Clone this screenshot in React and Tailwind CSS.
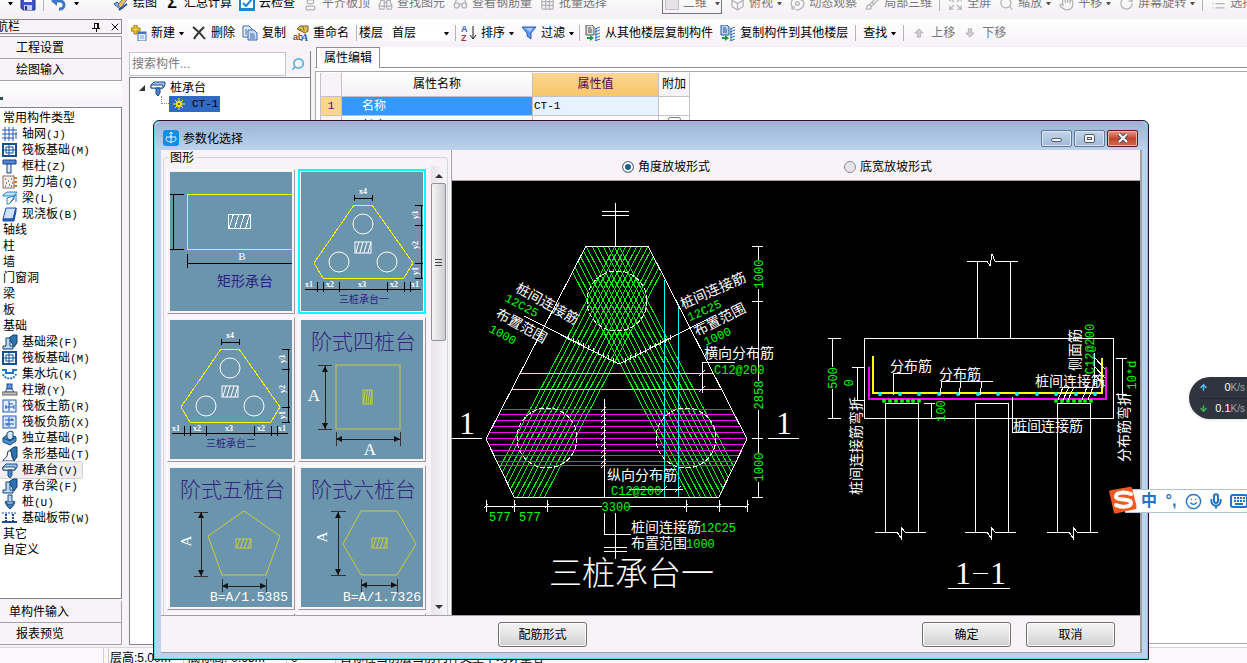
import React, { useState } from 'react';
import {
  AlignVerticalJustifyStart,
  ArrowDown,
  ArrowUp,
  Binoculars,
  Box,
  Brush,
  Expand,
  Glasses,
  Grid3x3,
  Hand,
  List,
  Mic,
  Orbit,
  RotateCw,
  Search,
  Smile,
  X,
} from 'lucide-react';

const CAD_FONT = '"Liberation Mono", "Noto Sans CJK SC", monospace';

/* ---------- small shared parts ---------- */

const Caret = ({ className = 'border-t-black' }) => (
  <span className={`w-[5px] shrink-0 border-x-2 border-t-[3px] border-x-transparent ${className}`} />
);

const Separator = ({ tight }) => (
  <span className={`h-4 w-px shrink-0 bg-[#b4b4b8] ${tight ? '-mx-[2px]' : ''}`} />
);

const ToolButton = ({ icon, label, caret, disabled }) => (
  <button
    type="button"
    disabled={disabled}
    className={`flex shrink-0 items-center gap-1 whitespace-nowrap ${disabled ? 'text-[#77777b]' : 'text-black'}`}
  >
    <span className="flex h-4 w-4 items-center justify-center">{icon}</span>
    {label}
    {caret && <Caret className={disabled ? 'border-t-[#555555]' : 'border-t-black'} />}
  </button>
);

/* ---------- icons ---------- */

const SaveIcon = () => (
  <svg viewBox="0 0 16 16" className="h-4 w-4">
    <path d="M1 1h14v14H3l-2-2z" fill="#3b55c4" stroke="#22358f" />
    <rect x="4" y="1" width="8" height="6" fill="#f4f6ff" />
    <rect x="4" y="10" width="8" height="5" fill="#c9d0ee" />
    <rect x="5" y="11" width="2" height="4" fill="#22358f" />
  </svg>
);

const UndoIcon = () => (
  <svg viewBox="0 0 16 16" className="h-4 w-4">
    <path d="M3 6h6a4 4 0 0 1 0 8H8" fill="none" stroke="#3d76c9" strokeWidth="3" />
    <path d="M6 1v10L0 6z" fill="#3d76c9" />
  </svg>
);

const DrawIcon = () => (
  <svg viewBox="0 0 16 16" className="h-4 w-4">
    <path d="M1 9l6 5 3-1-6-6z" fill="#8fb4e8" stroke="#2a4f97" />
    <path d="M5 10L12 1l3 2-7 10z" fill="#eac05a" stroke="#5c6fa8" />
    <path d="M6 15l8-6" stroke="#2a4f97" strokeWidth="2" />
  </svg>
);

const CloudCheckIcon = () => (
  <svg viewBox="0 0 16 16" className="h-4 w-4">
    <rect width="16" height="15" y="1" fill="#1e86d0" />
    <rect x="2" y="3" width="12" height="10" fill="#ffffff" />
    <path d="M4 8l3 3 6-7" fill="none" stroke="#1e86d0" strokeWidth="2" />
  </svg>
);

const NewIcon = () => (
  <svg viewBox="0 0 16 16" className="h-4 w-4">
    <path d="M3 0h3v3h3v3H6v3H3V6H0V3h3z" fill="#f3c932" stroke="#9c7a12" />
    <rect x="7" y="7" width="8" height="9" fill="#e9f1fd" stroke="#4572b8" />
    <rect x="7" y="7" width="8" height="2" fill="#4572b8" />
    <path d="M9 11h4M9 13h4" stroke="#7fa2d8" />
  </svg>
);

const DeleteIcon = () => (
  <svg viewBox="0 0 14 14" className="h-[14px] w-[14px]">
    <path d="M1 1c4 3 8 7 12 12M12 1C8 5 4 9 2 13" fill="none" stroke="#333333" strokeWidth="2" />
  </svg>
);

const CopyIcon = () => (
  <svg viewBox="0 0 16 16" className="h-4 w-4">
    <path d="M1 1h6l3 3v8H1z" fill="#e6effc" stroke="#3e68b3" />
    <path d="M6 5h6l3 3v7H6z" fill="#c8dbf7" stroke="#3e68b3" />
    <path d="M8 9h4M8 11h5M8 13h5M3 5h2M3 7h2M3 9h2" stroke="#3e68b3" />
  </svg>
);

const RenameIcon = () => (
  <svg viewBox="0 0 16 16" className="h-4 w-4">
    <path d="M4 4l3-3h8v5l-3 2-4-2z" fill="#e4bb50" stroke="#776021" />
    <path d="M4 4l5 1M10 1l1 5" stroke="#5d8a3c" />
    <text x="0" y="15" fontSize="9" fontFamily="Liberation Sans" fill="#222222">ab</text>
    <text x="8" y="16" fontSize="11" fontWeight="bold" fontStyle="italic" fontFamily="Liberation Serif" fill="#2b5fc0">A</text>
  </svg>
);

const SortIcon = () => (
  <svg viewBox="0 0 16 16" className="h-4 w-4">
    <text x="0" y="7" fontSize="9" fontWeight="bold" fontFamily="Liberation Sans" fill="#3567b8">A</text>
    <text x="0" y="16" fontSize="9" fontWeight="bold" fontFamily="Liberation Sans" fill="#a33a3a">Z</text>
    <path d="M12 1v13M9 10l3 4 3-4" fill="none" stroke="#222222" />
  </svg>
);

const FilterIcon = () => (
  <svg viewBox="0 0 16 16" className="h-4 w-4">
    <path d="M1 2h14L10 8v6l-4-3V8z" fill="#5b97ee" stroke="#2a5cb8" />
    <path d="M4 3h8L9 7z" fill="#a8cbfb" />
  </svg>
);

const FloorCopyIcon = ({ fill, stroke }) => (
  <svg viewBox="0 0 16 16" className="h-4 w-4">
    <path d="M1 0h6l2 2v8H1z" fill={fill} stroke={stroke} />
    <path d="M3 3h3M3 5h4M3 7h4" stroke={stroke} />
    <path d="M2 12h3v-2l4 3-4 3v-2H2z" fill="#1d9b3c" />
    <path d="M10 4l5-2M10 7l5-2M10 10l5-2M10 13l5-2M10 16l5-2M11 3v13" stroke="#2d6fc4" />
  </svg>
);

const MoveArrowIcon = ({ down }) => (
  <svg viewBox="0 0 12 12" className={`h-[10px] w-[10px] ${down ? 'rotate-180' : ''}`}>
    <path d="M6 1l5 5H8v5H4V6H1z" fill="#d0ccd2" stroke="#b2adb5" />
  </svg>
);

const PinIcon = () => (
  <svg viewBox="0 0 10 10" className="h-[10px] w-[10px]" shapeRendering="crispEdges">
    <path d="M3 1h5M3 1v5M6 1v5M7 1v5M1 6h8M5 6v4" fill="none" stroke="#111111" />
  </svg>
);

const KeyboardIcon = () => (
  <svg viewBox="0 0 18 14" className="h-[14px] w-[18px]">
    <rect x="1" y="1" width="16" height="12" rx="2" fill="#ffffff" stroke="#2173c8" strokeWidth="2" />
    <path d="M4 4h11M4 7h11" stroke="#2173c8" strokeWidth="2" strokeDasharray="2 1" />
    <path d="M5 10h8" stroke="#2173c8" strokeWidth="2" />
  </svg>
);

// Component icons of the navigation tree, all on a 16 x 16 grid
const NAV_ICONS = {
  axis: <path d="M0 4h15M0 8h15M0 12h12M3 1v14M7 1v14M11 1v14M14 6v7" stroke="#2a56b8" />,
  raft: (
    <g fill="none" stroke="#174f8f">
      <rect x="1" y="2" width="13" height="12" strokeWidth="2" />
      <rect x="4" y="5" width="7" height="6" />
      <path d="M7 2v12M2 8h12" />
    </g>
  ),
  column: (
    <g stroke="#1d3f8c">
      <path d="M1 2h13v4H1z" fill="#4f86d8" />
      <path d="M5 6h4v9H5z" fill="#dbe9ff" />
    </g>
  ),
  wall: (
    <g>
      <rect x="1" y="2" width="11" height="12" fill="#f3ece8" stroke="#8a6f60" />
      <path d="M3 5h1M6 7h1M9 5h1M4 9h1M7 11h1M3 12h1M10 9h1M9 12h1" stroke="#333333" />
      <path d="M12 4h3M12 8h3M12 12h3" stroke="#d07a20" strokeWidth="2" />
    </g>
  ),
  beam: (
    <g stroke="#2b83c8">
      <path d="M1 5l4-3h10l-3 4H1z" fill="#bfe0f8" />
      <path d="M5 8l7-2v3l-5 5H5z" fill="#ffffff" />
      <path d="M8 13L14 4v8" fill="none" />
    </g>
  ),
  slab: (
    <g stroke="#1e4fae">
      <path d="M4 2h10l-3 11H1z" fill="#cfe2fb" />
      <path d="M1 13h10l3-11v3l-2 10H1z" fill="#2f64c4" />
    </g>
  ),
  footingBeam: (
    <g stroke="#123f73">
      <path d="M7 4l4-3h4v8l-3 4z" fill="#2a72b0" />
      <path d="M1 15v-3h3V4h4v8h3v3z" fill="#b7d8f2" />
    </g>
  ),
  pit: (
    <g fill="none" stroke="#2676c8" strokeWidth="2">
      <path d="M0 4h4v3h7V4h4" />
      <path d="M1 8c2 6 11 6 13 0" strokeDasharray="2 1" />
    </g>
  ),
  pier: (
    <g stroke="#1d4f9c">
      <rect x="5" y="2" width="5" height="5" fill="#5f93dd" />
      <path d="M3 10l2-3h5l2 3z" fill="#ffffff" />
      <rect x="0" y="10" width="15" height="3" fill="#bdbdbd" stroke="#666666" />
    </g>
  ),
  mainBar: (
    <g fill="none" stroke="#2358b4">
      <rect x="1" y="2" width="13" height="12" fill="#e7f0ff" />
      <path d="M3 9h9M7 3v10M7 6h4M4 7v4M12 7v4" />
    </g>
  ),
  negBar: (
    <g fill="none" stroke="#2358b4">
      <rect x="1" y="2" width="13" height="12" fill="#d8e6fd" />
      <path d="M3 6h9M3 10h9M7 3v10M10 4v3M5 9v3" />
    </g>
  ),
  isolated: (
    <g stroke="#154a80">
      <path d="M1 8l5-4 8 3v4l-6 4-7-3z" fill="#4a90c8" />
      <path d="M5 3l3-2 3 1v6l-3 2-3-2z" fill="#d3e8f8" />
      <path d="M1 8l7 3 6-4" fill="none" />
    </g>
  ),
  strip: (
    <g stroke="#123f73">
      <path d="M8 4l4-3h3v10l-3 4z" fill="#2a72b0" />
      <path d="M1 15c0-3 3-2 4-5l1-5h3l1 6 2 4z" fill="#ffffff" />
    </g>
  ),
  cap: (
    <g stroke="#1b4a86">
      <path d="M1 5l3-3h11v3l-2 3H1z" fill="#9dc4ea" />
      <path d="M1 5h12v3H1z" fill="#ffffff" />
      <path d="M6 8h4v5l-2 3-2-2z" fill="#4a86c8" />
    </g>
  ),
  pile: (
    <g stroke="#1b4a86">
      <path d="M6 1h4v7H6z" fill="#bcd6f0" />
      <path d="M3 8l2-1v3h6V7l2 1-2 4-3 3-3-3z" fill="#3f78b8" />
    </g>
  ),
  band: (
    <g stroke="#1b4aa0">
      <path d="M0 3h15" strokeDasharray="2 1" />
      <path d="M0 12h15" strokeWidth="2" />
      <path d="M4 4v8M11 4v8" strokeWidth="2" strokeDasharray="2 1" />
    </g>
  ),
};

const NavIcon = ({ name }) => (
  <svg viewBox="0 0 16 16" className="h-4 w-4 shrink-0" fill="none">
    {NAV_ICONS[name]}
  </svg>
);

/* ---------- top toolbars ---------- */

const grey = { size: 15, color: '#b4b1b6', strokeWidth: 2 };

const MainToolbar = () => (
  <header className="h-[19px] shrink-0 overflow-hidden bg-[#f6f1f6]">
    <div className="-mt-2 flex h-[22px] items-center gap-[7px] bg-gradient-to-b from-white to-[#f4f2f4] pl-1">
      <div className="flex w-[102px] shrink-0 items-center gap-[7px] pl-1">
        <Caret />
        <button type="button" aria-label="保存"><SaveIcon /></button>
        <Separator />
        <button type="button" aria-label="撤销"><UndoIcon /></button>
        <Caret />
      </div>
      <ToolButton icon={<DrawIcon />} label="绘图" />
      <ToolButton icon={<span className="text-base font-bold">Σ</span>} label="汇总计算" />
      <ToolButton icon={<CloudCheckIcon />} label="云检查" />
      <ToolButton icon={<AlignVerticalJustifyStart {...grey} />} label="平齐板顶" disabled />
      <ToolButton icon={<Binoculars {...grey} />} label="查找图元" disabled />
      <ToolButton icon={<Glasses {...grey} />} label="查看钢筋量" disabled />
      <ToolButton icon={<Grid3x3 {...grey} />} label="批量选择" disabled />
      <button
        type="button"
        disabled
        className="ml-12 flex h-[22px] w-[60px] shrink-0 items-center gap-1 border border-[#77777b] pl-[2px] text-[#77777b]"
      >
        <span className="h-[13px] w-[14px] border border-[#c4c0c6] bg-[#e6e3e8]" />
        二维
        <Caret className="ml-1 border-t-[#555555]" />
      </button>
      <ToolButton icon={<Box {...grey} />} label="俯视" caret disabled />
      <ToolButton icon={<Orbit {...grey} />} label="动态观察" disabled />
      <ToolButton icon={<Brush {...grey} />} label="局部三维" disabled />
      <Separator />
      <ToolButton icon={<Expand {...grey} />} label="全屏" disabled />
      <ToolButton icon={<Search {...grey} />} label="缩放" caret disabled />
      <ToolButton icon={<Hand {...grey} />} label="平移" caret disabled />
      <ToolButton icon={<RotateCw {...grey} />} label="屏幕旋转" caret disabled />
      <Separator />
      <ToolButton icon={<List {...grey} />} label="选择楼层" disabled />
    </div>
  </header>
);

const ComponentToolbar = () => (
  <div className="flex h-[28px] shrink-0 items-center gap-[7px] overflow-hidden bg-gradient-to-b from-white to-[#f6f1f6] pl-[3px]">
    <ToolButton icon={<NewIcon />} label="新建" caret />
    <ToolButton icon={<DeleteIcon />} label="删除" />
    <ToolButton icon={<CopyIcon />} label="复制" />
    <ToolButton icon={<RenameIcon />} label="重命名" />
    <div className="flex shrink-0 items-center gap-[2px]">
      <Separator />
      <label htmlFor="floor">楼层</label>
    </div>
    <div className="flex w-[60px] shrink-0 items-center bg-white">
      <select id="floor" className="w-[54px] appearance-none bg-transparent pl-[2px] text-xs outline-none">
        <option>首层</option>
        <option>基础层</option>
      </select>
      <Caret />
    </div>
    <Separator tight />
    <ToolButton icon={<SortIcon />} label="排序" caret />
    <ToolButton icon={<FilterIcon />} label="过滤" caret />
    <Separator tight />
    <ToolButton icon={<FloorCopyIcon fill="#dddddd" stroke="#555555" />} label="从其他楼层复制构件" />
    <ToolButton icon={<FloorCopyIcon fill="#b9d4f6" stroke="#2c559c" />} label="复制构件到其他楼层" />
    <Separator />
    <button type="button" className="flex shrink-0 items-center gap-1">
      查找
      <Caret />
    </button>
    <Separator />
    <ToolButton icon={<MoveArrowIcon />} label="上移" disabled />
    <ToolButton icon={<MoveArrowIcon down />} label="下移" disabled />
  </div>
);

/* ---------- left navigation ---------- */

const navItems = [
  { label: '常用构件类型' },
  { label: '轴网', hotkey: '(J)', icon: 'axis' },
  { label: '筏板基础', hotkey: '(M)', icon: 'raft' },
  { label: '框柱', hotkey: '(Z)', icon: 'column' },
  { label: '剪力墙', hotkey: '(Q)', icon: 'wall' },
  { label: '梁', hotkey: '(L)', icon: 'beam' },
  { label: '现浇板', hotkey: '(B)', icon: 'slab' },
  { label: '轴线' },
  { label: '柱' },
  { label: '墙' },
  { label: '门窗洞' },
  { label: '梁' },
  { label: '板' },
  { label: '基础' },
  { label: '基础梁', hotkey: '(F)', icon: 'footingBeam' },
  { label: '筏板基础', hotkey: '(M)', icon: 'raft' },
  { label: '集水坑', hotkey: '(K)', icon: 'pit' },
  { label: '柱墩', hotkey: '(Y)', icon: 'pier' },
  { label: '筏板主筋', hotkey: '(R)', icon: 'mainBar' },
  { label: '筏板负筋', hotkey: '(X)', icon: 'negBar' },
  { label: '独立基础', hotkey: '(P)', icon: 'isolated' },
  { label: '条形基础', hotkey: '(T)', icon: 'strip' },
  { label: '桩承台', hotkey: '(V)', icon: 'cap', selected: true },
  { label: '承台梁', hotkey: '(F)', icon: 'footingBeam' },
  { label: '桩', hotkey: '(U)', icon: 'pile' },
  { label: '基础板带', hotkey: '(W)', icon: 'band' },
  { label: '其它' },
  { label: '自定义' },
];

const NavSection = ({ label, className = 'pl-4' }) => (
  <button
    type="button"
    className={`h-[22px] shrink-0 border-b border-r border-[#a4a0a8] bg-[#f7f3f7] text-left ${className}`}
  >
    {label}
  </button>
);

const Navigation = () => (
  <aside className="flex w-[128px] shrink-0 flex-col bg-[#f7f3f7] pr-[6px]">
    <div className="flex h-[15px] shrink-0 items-center border border-l-0 border-[#8c868e]">
      <span className="-ml-1 flex-1">航栏</span>
      <button type="button" aria-label="固定" className="w-[18px]"><PinIcon /></button>
      <button type="button" aria-label="关闭"><X size={12} /></button>
    </div>
    <div className="mt-[2px] flex shrink-0 flex-col border-t border-[#a4a0a8]">
      <NavSection label="工程设置" />
      <NavSection label="绘图输入" />
    </div>
    <div className="flex h-[26px] shrink-0 items-center bg-gradient-to-b from-white to-[#f7f3f7]">
      <span className="mt-2 h-[3px] w-[3px] bg-[#23524f]" />
    </div>
    <ul className="flex-1 overflow-hidden border-r border-t border-[#85818c] bg-white pt-[2px]">
      {navItems.map((item, index) => (
        <li key={index} className="flex h-4 items-center">
          {item.icon ? (
            <button
              type="button"
              className={`flex h-4 items-center gap-1 whitespace-nowrap pl-[2px] pr-1 ${
                item.selected ? 'rounded-xs bg-[#f0eef0] outline outline-1 outline-[#d4d0d4]' : ''
              }`}
            >
              <NavIcon name={item.icon} />
              <span>
                {item.label}
                <span className="font-['Liberation_Mono'] text-[11px]">{item.hotkey}</span>
              </span>
            </button>
          ) : (
            <button type="button" className="pl-[3px]">{item.label}</button>
          )}
        </li>
      ))}
    </ul>
    <div className="flex shrink-0 flex-col border-t border-[#85818c] pb-[2px] pt-[2px]">
      <NavSection label="单构件输入" className="pl-[9px]" />
      <NavSection label="报表预览" />
    </div>
  </aside>
);

/* ---------- component tree and property grid ---------- */

const ComponentTree = () => (
  <section className="flex w-[183px] shrink-0 flex-col pb-[2px] pl-px pt-1">
    <div className="flex h-[26px] shrink-0 items-center border-r border-[#85818c] bg-[#f7f3f7]">
      <input
        type="text"
        aria-label="搜索构件"
        placeholder="搜索构件..."
        className="h-6 w-[157px] border border-[#c4c4cc] bg-white px-[2px] text-xs outline-none placeholder:text-[#77777b]"
      />
      <button type="button" aria-label="搜索" className="flex flex-1 justify-center">
        <Search size={14} color="#5eb0e6" strokeWidth={3} className="-scale-x-100" />
      </button>
    </div>
    <div className="flex-1 border border-[#85818c] bg-white pt-[2px]">
      <div className="flex h-4 items-center gap-1 pl-2">
        <svg viewBox="0 0 8 8" className="h-2 w-2"><path d="M7 1v6H1z" fill="#333333" /></svg>
        <NavIcon name="cap" />
        桩承台
      </div>
      <div className="flex h-4 items-center pl-[31px]">
        <span className="h-2 w-2 -translate-y-1 border-b border-l border-dotted border-[#888888]" />
        <button type="button" className="flex h-4 w-[51px] items-center gap-[7px] bg-[#316ac5] pl-1 text-black">
          <svg viewBox="0 0 12 12" className="h-3 w-3">
            <path d="M6 0v12M0 6h12M2 2l8 8M10 2l-8 8" stroke="#ffee00" strokeWidth="1" />
            <circle cx="6" cy="6" r="3" fill="#ffee00" />
            <circle cx="6" cy="6" r="1" fill="#333300" />
          </svg>
          <span className="font-['Liberation_Mono'] text-[11px]">CT-1</span>
        </button>
      </div>
    </div>
  </section>
);

const PropertyEditor = () => (
  <section className="ml-1 flex min-w-0 flex-1 flex-col bg-white">
    <div className="flex h-[21px] shrink-0 items-end border-b border-[#8f8f8f]">
      <button type="button" className="-mb-px ml-px h-[21px] w-16 border border-b-0 border-[#8f8f8f] bg-white">
        属性编辑
      </button>
    </div>
    <div className="mb-[3px] mt-[3px] flex-1 border-b border-l border-t border-[#a8a8a8] pl-1 pt-px">
      <table className="w-[370px] table-fixed border-collapse">
        <thead>
          <tr className="h-[23px]">
            <th className="w-[21px] border border-t-0 border-[#c4c0c4] bg-[#f7f3f7]" />
            <th className="w-[191px] border border-t-0 border-[#c4c0c4] bg-gradient-to-b from-white to-[#f4f0f4] font-normal">属性名称</th>
            <th className="w-[126px] border border-t-0 border-[#c4c0c4] bg-gradient-to-b from-[#fbd694] to-[#f7c668] font-normal text-[#5a0058]">属性值</th>
            <th className="border border-t-0 border-[#c4c0c4] bg-gradient-to-b from-white to-[#f4f0f4] font-normal">附加</th>
          </tr>
        </thead>
        <tbody>
          <tr className="h-[19px] leading-4">
            <td className="border border-[#c4c0c4] bg-[#fcd68c] text-center font-['Liberation_Mono'] text-[11px] text-[#5a0058]">1</td>
            <td className="border border-[#c4c0c4] bg-[#3399ff] pl-5 text-white">名称</td>
            <td className="border border-[#c4c0c4] bg-[#e6f2ff] pl-px font-['Liberation_Mono'] text-[11px]">CT-1</td>
            <td className="border border-[#c4c0c4]" />
          </tr>
          <tr className="h-[19px] leading-5">
            <td className="border border-[#c4c0c4] bg-[#f7f3f7] text-center font-['Liberation_Mono'] text-[11px]">2</td>
            <td className="border border-[#c4c0c4] pl-5">长度</td>
            <td className="border border-[#c4c0c4]" />
            <td className="border border-[#c4c0c4] text-center"><input type="checkbox" aria-label="附加" /></td>
          </tr>
        </tbody>
      </table>
    </div>
  </section>
);

const StatusBar = () => (
  <footer className="flex h-4 shrink-0 gap-1 overflow-hidden border-t border-[#d8d4d8] bg-[#faf8fa] leading-5">
    <span className="w-[104px] shrink-0 border-r border-[#d0ccd0]" />
    <span className="w-[76px] shrink-0 whitespace-nowrap border-x border-[#d0ccd0] pl-px">层高:5.00m</span>
    <span className="w-[94px] shrink-0 whitespace-nowrap">底标高:-0.65m</span>
    <span className="w-[50px] shrink-0 border-x border-[#d0ccd0] pl-1">0</span>
    <span className="flex-1 whitespace-nowrap">目标柱当前层当前构件类型平均计量者</span>
  </footer>
);

/* ---------- shape thumbnails ---------- */

const Hatch = ({ x, y, w, h, color = '#ffffff' }) => (
  <g fill="none" stroke={color}>
    <rect x={x} y={y} width={w} height={h} />
    {[0.25, 0.5, 0.75, 1].map((t) => (
      <line key={t} x1={x + w * t - w * 0.2} y1={y + h} x2={x + w * t} y2={y} />
    ))}
  </g>
);

const Arrow = ({ x1, y1, x2, y2 }) => {
  const vertical = x1 === x2;
  return (
    <g>
      <line x1={x1} y1={y1} x2={x2} y2={y2} stroke="#222222" shapeRendering="crispEdges" />
      {vertical ? (
        <path d={`M${x1} ${y1}l-3 6h6zM${x2} ${y2}l-3 -6h6z`} fill="#111111" />
      ) : (
        <path d={`M${x1} ${y1}l6 -3v6zM${x2} ${y2}l-6 -3v6z`} fill="#111111" />
      )}
    </g>
  );
};

const RectShape = () => (
  <g shapeRendering="crispEdges">
    <path d="M123 22H17V77H123" fill="none" stroke="#ffff00" />
    <path d="M0 22H14M0 77H14M3 22V77M17 82V96M17 91H122" stroke="#000000" />
    <Hatch x={58} y={42} w={22} h={14} />
    <text x="72" y="88" fontSize="11" textAnchor="middle" fill="#ffffff" fontFamily="Liberation Serif">B</text>
    <text x="47" y="114" fontSize="14" fill="#2b2180">矩形承台</text>
  </g>
);

const ThreePileShape = ({ title }) => (
  <g>
    <g shapeRendering="crispEdges">
      <path d="M53 33H71L112 91L103 106H22L13 91Z" fill="none" stroke="#ffff00" />
      <path
        d="M53 26H71M53 23V29M71 23V29M120 33V106M114 33H122M114 53H122M114 91H122M114 106H122M4 117H120M16 110V120M22 110V120M38 110V120M86 110V120M103 110V120M109 110V120"
        stroke="#000000"
      />
    </g>
    <g fill="none" stroke="#ffffff">
      <circle cx="62" cy="52" r="10" />
      <circle cx="38" cy="90" r="10" />
      <circle cx="86" cy="90" r="10" />
    </g>
    <Hatch x={54} y={70} w={16} h={11} />
    <g fontSize="8" fontWeight="bold" textAnchor="middle" fill="#ffffff" fontFamily="Liberation Serif">
      <text x="62" y="22">x4</text>
      <text x="8" y="115">x1</text>
      <text x="29" y="115">x2</text>
      <text x="61" y="115">x3</text>
      <text x="93" y="115">x2</text>
      <text x="114" y="115">x1</text>
      <text transform="translate(117 43) rotate(-90)">y3</text>
      <text transform="translate(117 73) rotate(-90)">y2</text>
      <text transform="translate(117 99) rotate(-90)">y1</text>
    </g>
    <text x="63" y="131" fontSize="10" textAnchor="middle" fill="#2b2180">{title}</text>
  </g>
);

const SteppedTitle = ({ children }) => (
  <text x="10" y="29" fontSize="21" fontWeight="300" fill="#32267f">{children}</text>
);

const SquareShape = () => (
  <g>
    <SteppedTitle>阶式四桩台</SteppedTitle>
    <rect x="35" y="45" width="64" height="64" fill="none" stroke="#c8cc3c" />
    <path d="M17 45H31M17 109H31M35 112V126M99 112V126" stroke="#333333" shapeRendering="crispEdges" />
    <Arrow x1={24} y1={46} x2={24} y2={109} />
    <Arrow x1={35} y1={119} x2={99} y2={119} />
    <Hatch x={62} y={70} w={9} h={14} color="#c8cc3c" />
    <g fontSize="17" textAnchor="middle" fill="#ffffff" fontFamily="Liberation Serif">
      <text x="13" y="81">A</text>
      <text x="69" y="135">A</text>
    </g>
  </g>
);

const PentagonShape = () => (
  <g>
    <SteppedTitle>阶式五桩台</SteppedTitle>
    <path d="M74 43L110 68L96 107H52L38 68Z" fill="none" stroke="#c8cc3c" />
    <path d="M24 44H38M24 108H38M52 111V124M96 111V124" stroke="#333333" shapeRendering="crispEdges" />
    <Arrow x1={31} y1={44} x2={31} y2={108} />
    <Arrow x1={52} y1={118} x2={96} y2={118} />
    <Hatch x={66} y={71} w={15} h={9} color="#c8cc3c" />
    <text transform="translate(21 73) rotate(-90)" fontSize="15" textAnchor="middle" fill="#ffffff" fontFamily="Liberation Serif">A</text>
    <text x="40" y="133" fontSize="13" fill="#ffffff" fontFamily="Liberation Mono">B=A/1.5385</text>
  </g>
);

const HexagonShape = () => (
  <g>
    <SteppedTitle>阶式六桩台</SteppedTitle>
    <path d="M60 43H96L115 76L96 107H60L42 76Z" fill="none" stroke="#c8cc3c" />
    <path d="M30 43H45M30 107H45M60 111V124M96 111V124" stroke="#333333" shapeRendering="crispEdges" />
    <Arrow x1={37} y1={44} x2={37} y2={107} />
    <Arrow x1={60} y1={117} x2={96} y2={117} />
    <Hatch x={71} y={70} w={15} h={10} color="#c8cc3c" />
    <text transform="translate(26 69) rotate(-90)" fontSize="15" textAnchor="middle" fill="#ffffff" fontFamily="Liberation Serif">A</text>
    <text x="42" y="133" fontSize="13" fill="#ffffff" fontFamily="Liberation Mono">B=A/1.7326</text>
  </g>
);

const shapes = [
  { id: 'rect', name: '矩形承台', drawing: <RectShape /> },
  { id: 'three1', name: '三桩承台一', drawing: <ThreePileShape title="三桩承台一" /> },
  { id: 'three2', name: '三桩承台二', drawing: <g transform="translate(-2 -4)"><ThreePileShape title="三桩承台二" /></g> },
  { id: 'four', name: '阶式四桩台', drawing: <SquareShape /> },
  { id: 'five', name: '阶式五桩台', drawing: <PentagonShape /> },
  { id: 'six', name: '阶式六桩台', drawing: <HexagonShape /> },
  { id: 'more1', name: '更多', drawing: null },
  { id: 'more2', name: '更多', drawing: null },
];

const ShapePicker = ({ selected, onSelect }) => (
  <section className="flex w-[290px] shrink-0 flex-col border-r border-white bg-[#f7f3f7]">
    <fieldset className="relative mx-[2px] mt-[7px] min-h-0 flex-1 rounded-t border border-b-0 border-[#d0d8de]">
      <legend className="absolute -top-2 left-1 bg-[#f7f3f7] px-[2px] leading-4">图形</legend>
      <div className="flex h-full pl-[3px] pt-[11px]">
        <div className="grid h-full grid-cols-[128px_128px] content-start gap-[3px] overflow-hidden">
          {shapes.map((shape) => (
            <button
              key={shape.id}
              type="button"
              aria-label={shape.name}
              onClick={() => onSelect(shape.id)}
              className={`h-[145px] border ${
                selected === shape.id
                  ? 'border-2 border-[#00ffff] p-px'
                  : 'border-b-[#9c989e] border-l-white border-r-[#9c989e] border-t-white p-[2px]'
              }`}
            >
              <svg viewBox="0 0 122 139" className="h-full w-full bg-[#6b95ad]">
                {shape.drawing}
              </svg>
            </button>
          ))}
        </div>
        <div className="-mt-[3px] ml-[5px] flex w-[15px] flex-col items-center bg-gradient-to-r from-[#e8e5e8] to-[#f7f5f7]">
          <span className="mt-2 border-x-4 border-b-4 border-x-transparent border-b-[#333333]" />
          <div className="mt-[5px] flex h-[158px] w-full flex-col items-center justify-center gap-[2px] rounded-xs border border-[#929096] bg-gradient-to-r from-[#f6f5f6] to-[#cfcdd1]">
            <span className="h-px w-[7px] bg-[#444444]" />
            <span className="h-px w-[7px] bg-[#444444]" />
            <span className="h-px w-[7px] bg-[#444444]" />
          </div>
          <span className="mb-[6px] mt-auto border-x-4 border-t-4 border-x-transparent border-t-[#333333]" />
        </div>
      </div>
    </fieldset>
  </section>
);

/* ---------- CAD preview ---------- */

const capOutline = 'M586 246H648L747 439L719 497H514L486 439Z';
const barOffsets = [-30, -25, -19, -14, -8, -3, 3, 8, 14, 19, 25, 30];

// y of every main bar, with the x range between the sloping sides
const mainBars = [
  [409, 501, 732],
  [414, 499, 734],
  [420, 496, 737],
  [426, 493, 740],
  [432, 490, 743],
  [438, 487, 746],
  [444, 489, 744],
  [450, 492, 741],
  [455, 494, 739],
  [461, 497, 736],
  [465, 499, 734],
];

const PlanView = () => (
  <g>
    <clipPath id="cap-clip">
      <path d={capOutline} />
    </clipPath>
    {/* connecting bars between the piles */}
    <g clipPath="url(#cap-clip)" shapeRendering="crispEdges" stroke="#00ff00">
      {barOffsets.map((offset) => (
        <React.Fragment key={offset}>
          <line x1={645 + offset} y1="246" x2={514 + offset} y2="498" />
          <line x1={589 + offset} y1="246" x2={720 + offset} y2="498" />
        </React.Fragment>
      ))}
    </g>
    <g shapeRendering="crispEdges">
      <path d="M520 373H713M512 389H722" stroke="#ffff00" />
      {mainBars.map(([y, x1, x2]) => (
        <rect key={y} x={x1} y={y} width={x2 - x1} height="1" fill="#ff00ff" />
      ))}
      <path d="M664 280V497M678 307V497" stroke="#00ffff" />
    </g>

    <g fill="none" stroke="#ffffff" shapeRendering="crispEdges">
      <path d={capOutline} />
      <g strokeDasharray="5 2">
        <circle cx="617" cy="301" r="30" />
        <circle cx="547" cy="438" r="30" />
        <circle cx="686" cy="438" r="30" />
      </g>
      <path d="M615 203V246M602 211H629M602 215H629M615 513V559M604 547H627M604 551H627" />
      <path d="M604 399V498M604 513V534H631" />
      <path d="M524 316L619 364L708 319" />
      <path d="M735 362H702V393M699 376l6 -6M699 392l6 -6M629 489H683M661 492l6 -6M675 492l6 -6" />
      {/* ticks along the spread ranges */}
      {[0, 1, 2, 3, 4, 5, 6, 7, 8, 9].map((i) => (
        <path key={i} d={`M${568 + i * 5} ${340 + Math.round(i * 2.5)}v-5M${670 - i * 5} ${340 + Math.round(i * 2.5)}v-5`} />
      ))}
      {mainBars.map(([y]) => (
        <path key={y} d={`M601 ${y + 3}l5 -5`} />
      ))}
      {/* dimension lines */}
      <path d="M758 246V260M758 289V381M758 410V453M758 482V497M752 246H763M752 301H763M752 438H763M752 497H763" />
      <path d="M486 506H602M629 506H747M486 500V512M514 500V512M547 500V512M686 500V512M719 500V512M747 500V512" />
      <path d="M484 508l4 -4M512 508l4 -4M545 508l4 -4M684 508l4 -4M717 508l4 -4M745 508l4 -4" />
      <path d="M452 438H482M768 438H799" />
    </g>

    <g fill="#ffffff" fontSize="14">
      <text x="704" y="358">横向分布筋</text>
      <text x="607" y="480">纵向分布筋</text>
      <text x="631" y="532">桩间连接筋</text>
      <text x="631" y="548">布置范围</text>
      <g textAnchor="middle">
        <text transform="translate(545 308) rotate(29)">桩间连接筋</text>
        <text transform="translate(519 330) rotate(29)">布置范围</text>
        <text transform="translate(715 295) rotate(-24)">桩间连接筋</text>
        <text transform="translate(722 324) rotate(-27)">布置范围</text>
      </g>
    </g>
    <g fill="#00ff00" fontSize="12">
      <text x="714" y="374">C12@200</text>
      <text x="611" y="495">C12@200</text>
      <text x="700" y="532">12C25</text>
      <text x="686" y="548">1000</text>
      <text x="489" y="521">577</text>
      <text x="519" y="521">577</text>
      <g textAnchor="middle">
        <text x="616" y="511">3300</text>
        <text transform="translate(520 309) rotate(28)">12C25</text>
        <text transform="translate(501 338) rotate(28)">1000</text>
        <text transform="translate(706 314) rotate(-24)">12C25</text>
        <text transform="translate(719 340) rotate(-24)">1000</text>
        <text transform="translate(763 274) rotate(-90)">1000</text>
        <text transform="translate(763 395) rotate(-90)">2858</text>
        <text transform="translate(763 467) rotate(-90)">1000</text>
      </g>
    </g>
    <g fill="#ffffff" fontFamily="Liberation Serif" fontSize="32" textAnchor="middle">
      <text x="467" y="434">1</text>
      <text x="784" y="434">1</text>
    </g>
    <text x="549" y="585" fontSize="33" fontWeight="300" fill="#ffffff">三桩承台一</text>
  </g>
);

const cyanDots = [880, 900, 919, 939, 958, 978, 998, 1017, 1037, 1056, 1076, 1095];
const greenDots = [884, 890, 896, 902, 908, 913, 919, 1056, 1062, 1068, 1074, 1080, 1085, 1091];

const SectionView = () => (
  <g>
    <g fill="none" stroke="#ffffff" shapeRendering="crispEdges">
      <path d="M977 261V338M1010 261V338M967 261H987L990 266L992 254L995 261H1018" />
      <rect x="864" y="338" width="249" height="80" />
      {[885, 975, 1057].map((x) => (
        <path
          key={x}
          d={`M${x} 532V403H${x + 33}V532M${x - 10} 532H${x + 12}L${x + 16} 538L${x + 16} 527L${x + 20} 532H${x + 41}`}
        />
      ))}
    </g>
    <g fill="none" strokeWidth="2" shapeRendering="crispEdges">
      <path d="M873 356V393H1102V358" stroke="#ffff00" />
      <path d="M869 367V399H1106V367" stroke="#ff00ff" />
    </g>
    {cyanDots.map((x) => (
      <circle key={x} cx={x} cy="394" r="2" fill="#00ffff" />
    ))}
    {greenDots.map((x) => (
      <circle key={x} cx={x} cy="401" r="2" fill="#00ff00" />
    ))}
    <g fill="none" stroke="#ffffff" shapeRendering="crispEdges">
      {/* leaders */}
      <path d="M893 395V373H912M993 381H942L940 395M961 381L959 395M982 381L980 395" />
      <path d="M1098 387H1063L1058 400M1069 387L1063 400M1074 387L1068 400M1087 387L1082 400M1093 387L1088 400" />
      <path d="M1012 397V432H1042" />
      <path d="M1094 353V386M1094 357L1105 369M1094 366L1105 378M1094 374L1105 386" />
      {/* dimension lines */}
      <path d="M832 338V367M832 389V418M828 338H841M828 418H841M857 367V400M852 367H864M852 400H864" />
      <path d="M931 403V418M924 403H935M926 418H935M1122 358V394M1116 358H1127M1116 394H1127" />
      <path d="M948 588H1010" />
    </g>

    <g fill="#ffffff" fontSize="14">
      <text x="890" y="371">分布筋</text>
      <text x="939" y="379">分布筋</text>
      <text x="1035" y="386">桩间连接筋</text>
      <text x="1013" y="431">桩间连接筋</text>
      <g textAnchor="middle">
        <text transform="translate(1080 350) rotate(-90)">侧面筋</text>
        <text transform="translate(861 446) rotate(-90)">桩间连接筋弯折</text>
        <text transform="translate(1129 427) rotate(-90)">分布筋弯折</text>
      </g>
    </g>
    <g fill="#00ff00" fontSize="12" textAnchor="middle">
      <text transform="translate(1094 349) rotate(-90)">C12@200</text>
      <text transform="translate(837 378) rotate(-90)">500</text>
      <text transform="translate(853 383) rotate(-90)">0</text>
      <text transform="translate(945 411) rotate(-90)">100</text>
      <text transform="translate(1136 375) rotate(-90)">10*d</text>
    </g>
    <g fill="#ffffff" fontFamily="Liberation Serif" fontSize="32" textAnchor="middle">
      <text x="963" y="584">1</text>
      <text x="998" y="584">1</text>
    </g>
    <path d="M973 573H988" stroke="#ffffff" shapeRendering="crispEdges" />
  </g>
);

const Preview = () => (
  <div className="min-h-0 flex-1 bg-black">
    <svg viewBox="452 181 688 434" fontFamily={CAD_FONT} className="h-full w-full">
      <PlanView />
      <SectionView />
    </svg>
  </div>
);

/* ---------- dialog ---------- */

const DialogButton = ({ children, onClick }) => (
  <button
    type="button"
    onClick={onClick}
    className="h-[25px] w-[89px] rounded-[3px] border border-[#707070] bg-gradient-to-b from-[#f4f3f4] via-[#e6e5e6] to-[#d0cfd0] pt-[2px] ring-1 ring-inset ring-white"
  >
    {children}
  </button>
);

const ParameterDialog = () => {
  const [shape, setShape] = useState('three1');
  const [slope, setSlope] = useState('angle');

  return (
    <div
      role="dialog"
      aria-label="参数化选择"
      className="absolute bottom-[3px] left-[153px] right-[98px] top-[120px] flex flex-col rounded-t-md border border-[#1a1a1a] bg-[#bcd2ee] pb-[6px] pl-[7px] pr-[6px] ring-1 ring-inset ring-[#5fd4ee]"
    >
      <div className="-ml-[6px] -mr-[5px] mt-px flex h-7 shrink-0 items-center rounded-t-md bg-gradient-to-b from-[#9ab5d4] to-[#bcd2ee] pl-2 pr-[9px] pt-1">
        <svg viewBox="0 0 16 16" className="h-4 w-4">
          <rect width="16" height="16" rx="3" fill="#0d8ff2" />
          <path d="M3 7h10M8 3v9M6 4l2-2 2 2M3 8c0 5 5 3 5 5 0-2 5 0 5-5" fill="none" stroke="#ffffff" />
        </svg>
        <h2 className="flex-1 pl-1 pt-[2px]">参数化选择</h2>
        <div className="flex gap-[2px]">
          <button type="button" aria-label="最小化" className="flex h-[17px] w-[31px] items-center justify-center rounded-xs border border-[#5f7696] bg-gradient-to-b from-[#c3d5ea] to-[#9fb9d8] ring-1 ring-inset ring-[#dbe6f4]">
            <span className="mt-1 h-1 w-[11px] rounded-xs border border-[#555b66] bg-white" />
          </button>
          <button type="button" aria-label="最大化" className="flex h-[17px] w-[31px] items-center justify-center rounded-xs border border-[#5f7696] bg-gradient-to-b from-[#c3d5ea] to-[#9fb9d8] ring-1 ring-inset ring-[#dbe6f4]">
            <span className="flex h-[9px] w-[11px] items-center justify-center rounded-xs border border-[#555b66] bg-white">
              <span className="h-[3px] w-[5px] border border-[#555b66]" />
            </span>
          </button>
          <button type="button" aria-label="关闭" className="flex h-[17px] w-[31px] items-center justify-center rounded-xs border border-[#5c1a18] bg-gradient-to-b from-[#e59a8c] via-[#c4432c] to-[#d06a50] ring-1 ring-inset ring-[#eab4a8]">
            <svg viewBox="0 0 12 10" className="h-[10px] w-3">
              <path d="M2 1l8 8M10 1L2 9" stroke="#4a4a55" strokeWidth="4" />
              <path d="M2 1l8 8M10 1L2 9" stroke="#ffffff" strokeWidth="2" />
            </svg>
          </button>
        </div>
      </div>

      <div className="flex min-h-0 flex-1 flex-col border-r-2 border-[#a3a0a5]">
        <div className="flex min-h-0 flex-1">
          <ShapePicker selected={shape} onSelect={setShape} />
          <div className="flex min-w-0 flex-1 flex-col border-l border-[#a3a0a5]">
            <div className="flex h-[31px] shrink-0 items-center border-b border-[#a3a0a5] bg-[#f7f3f7] pt-1">
              <label className="ml-[170px] flex w-[222px] items-center gap-1">
                <input
                  type="radio"
                  name="slope"
                  checked={slope === 'angle'}
                  onChange={() => setSlope('angle')}
                  className="h-3 w-3 appearance-none rounded-full border border-[#707378] bg-white checked:bg-[#1d5f8e] checked:ring-2 checked:ring-inset checked:ring-white"
                />
                角度放坡形式
              </label>
              <label className="flex items-center gap-1">
                <input
                  type="radio"
                  name="slope"
                  checked={slope === 'width'}
                  onChange={() => setSlope('width')}
                  className="h-3 w-3 appearance-none rounded-full border border-[#8e8f8f] bg-[#e4e4e6] checked:bg-[#1d5f8e] checked:ring-2 checked:ring-inset checked:ring-white"
                />
                底宽放坡形式
              </label>
            </div>
            <Preview />
          </div>
        </div>
        <div className="flex h-[38px] shrink-0 items-center border-b border-t border-[#a3a0a5] bg-[#f7f3f7] pl-[337px] pr-[25px]">
          <DialogButton>配筋形式</DialogButton>
          <div className="ml-auto flex gap-[15px]">
            <DialogButton>确定</DialogButton>
            <DialogButton>取消</DialogButton>
          </div>
        </div>
      </div>
    </div>
  );
};

/* ---------- floating desktop widgets ---------- */

const NetSpeed = () => (
  <div className="absolute right-0 top-[377px] flex h-[42px] w-[58px] flex-col rounded-l-full bg-[#30343f] pl-[10px] text-[11px] text-white shadow">
    <div className="flex flex-1 items-center justify-between border-b border-[#252832] pr-[2px]">
      <ArrowUp size={9} color="#4fb8f0" strokeWidth={4} />
      <span>0<span className="text-[10px] text-[#a0a4ac]">K/s</span></span>
    </div>
    <div className="flex flex-1 items-center justify-between pr-[2px]">
      <ArrowDown size={9} color="#3fb45a" strokeWidth={4} />
      <span>0.1<span className="text-[10px] text-[#a0a4ac]">K/s</span></span>
    </div>
  </div>
);

const ImeBar = () => (
  <div className="absolute right-0 top-[486px] flex w-[138px] items-center">
    <svg viewBox="0 0 28 28" className="relative z-10 h-7 w-7 shrink-0">
      <path d="M3 4Q2 4 0 5L5 27Q6 28 9 27L27 23Q28 22 27 18L23 2Q22 0 20 1Z" fill="#f4581f" />
      <path d="M22 8C14 5 6 7 7 11C8 15 22 12 22 17C22 21 12 22 7 19" fill="none" stroke="#ffffff" strokeWidth="4" strokeLinecap="round" />
    </svg>
    <div className="-ml-3 mt-[2px] flex h-6 flex-1 items-center gap-[6px] border-y border-[#b3c3d6] bg-white pl-4 text-[#2173c8]">
      <button type="button" className="text-base font-bold leading-5">中</button>
      <button type="button" className="w-4 text-base font-bold leading-5">°,</button>
      <button type="button" aria-label="表情"><Smile size={17} strokeWidth={2} /></button>
      <button type="button" aria-label="语音"><Mic size={16} strokeWidth={3} /></button>
      <button type="button" aria-label="键盘" className="shrink-0"><KeyboardIcon /></button>
    </div>
  </div>
);

const App = () => (
  <div className="relative flex h-screen flex-col overflow-hidden bg-white font-['Liberation_Sans','Noto_Sans_CJK_SC',sans-serif] text-xs text-black">
    <MainToolbar />
    <div className="flex min-h-0 flex-1">
      <Navigation />
      <div className="flex min-w-0 flex-1 flex-col">
        <ComponentToolbar />
        <div className="flex min-h-0 flex-1 bg-[#f7f3f7]">
          <ComponentTree />
          <PropertyEditor />
        </div>
      </div>
    </div>
    <StatusBar />
    <ParameterDialog />
    <NetSpeed />
    <ImeBar />
  </div>
);

export default App;
